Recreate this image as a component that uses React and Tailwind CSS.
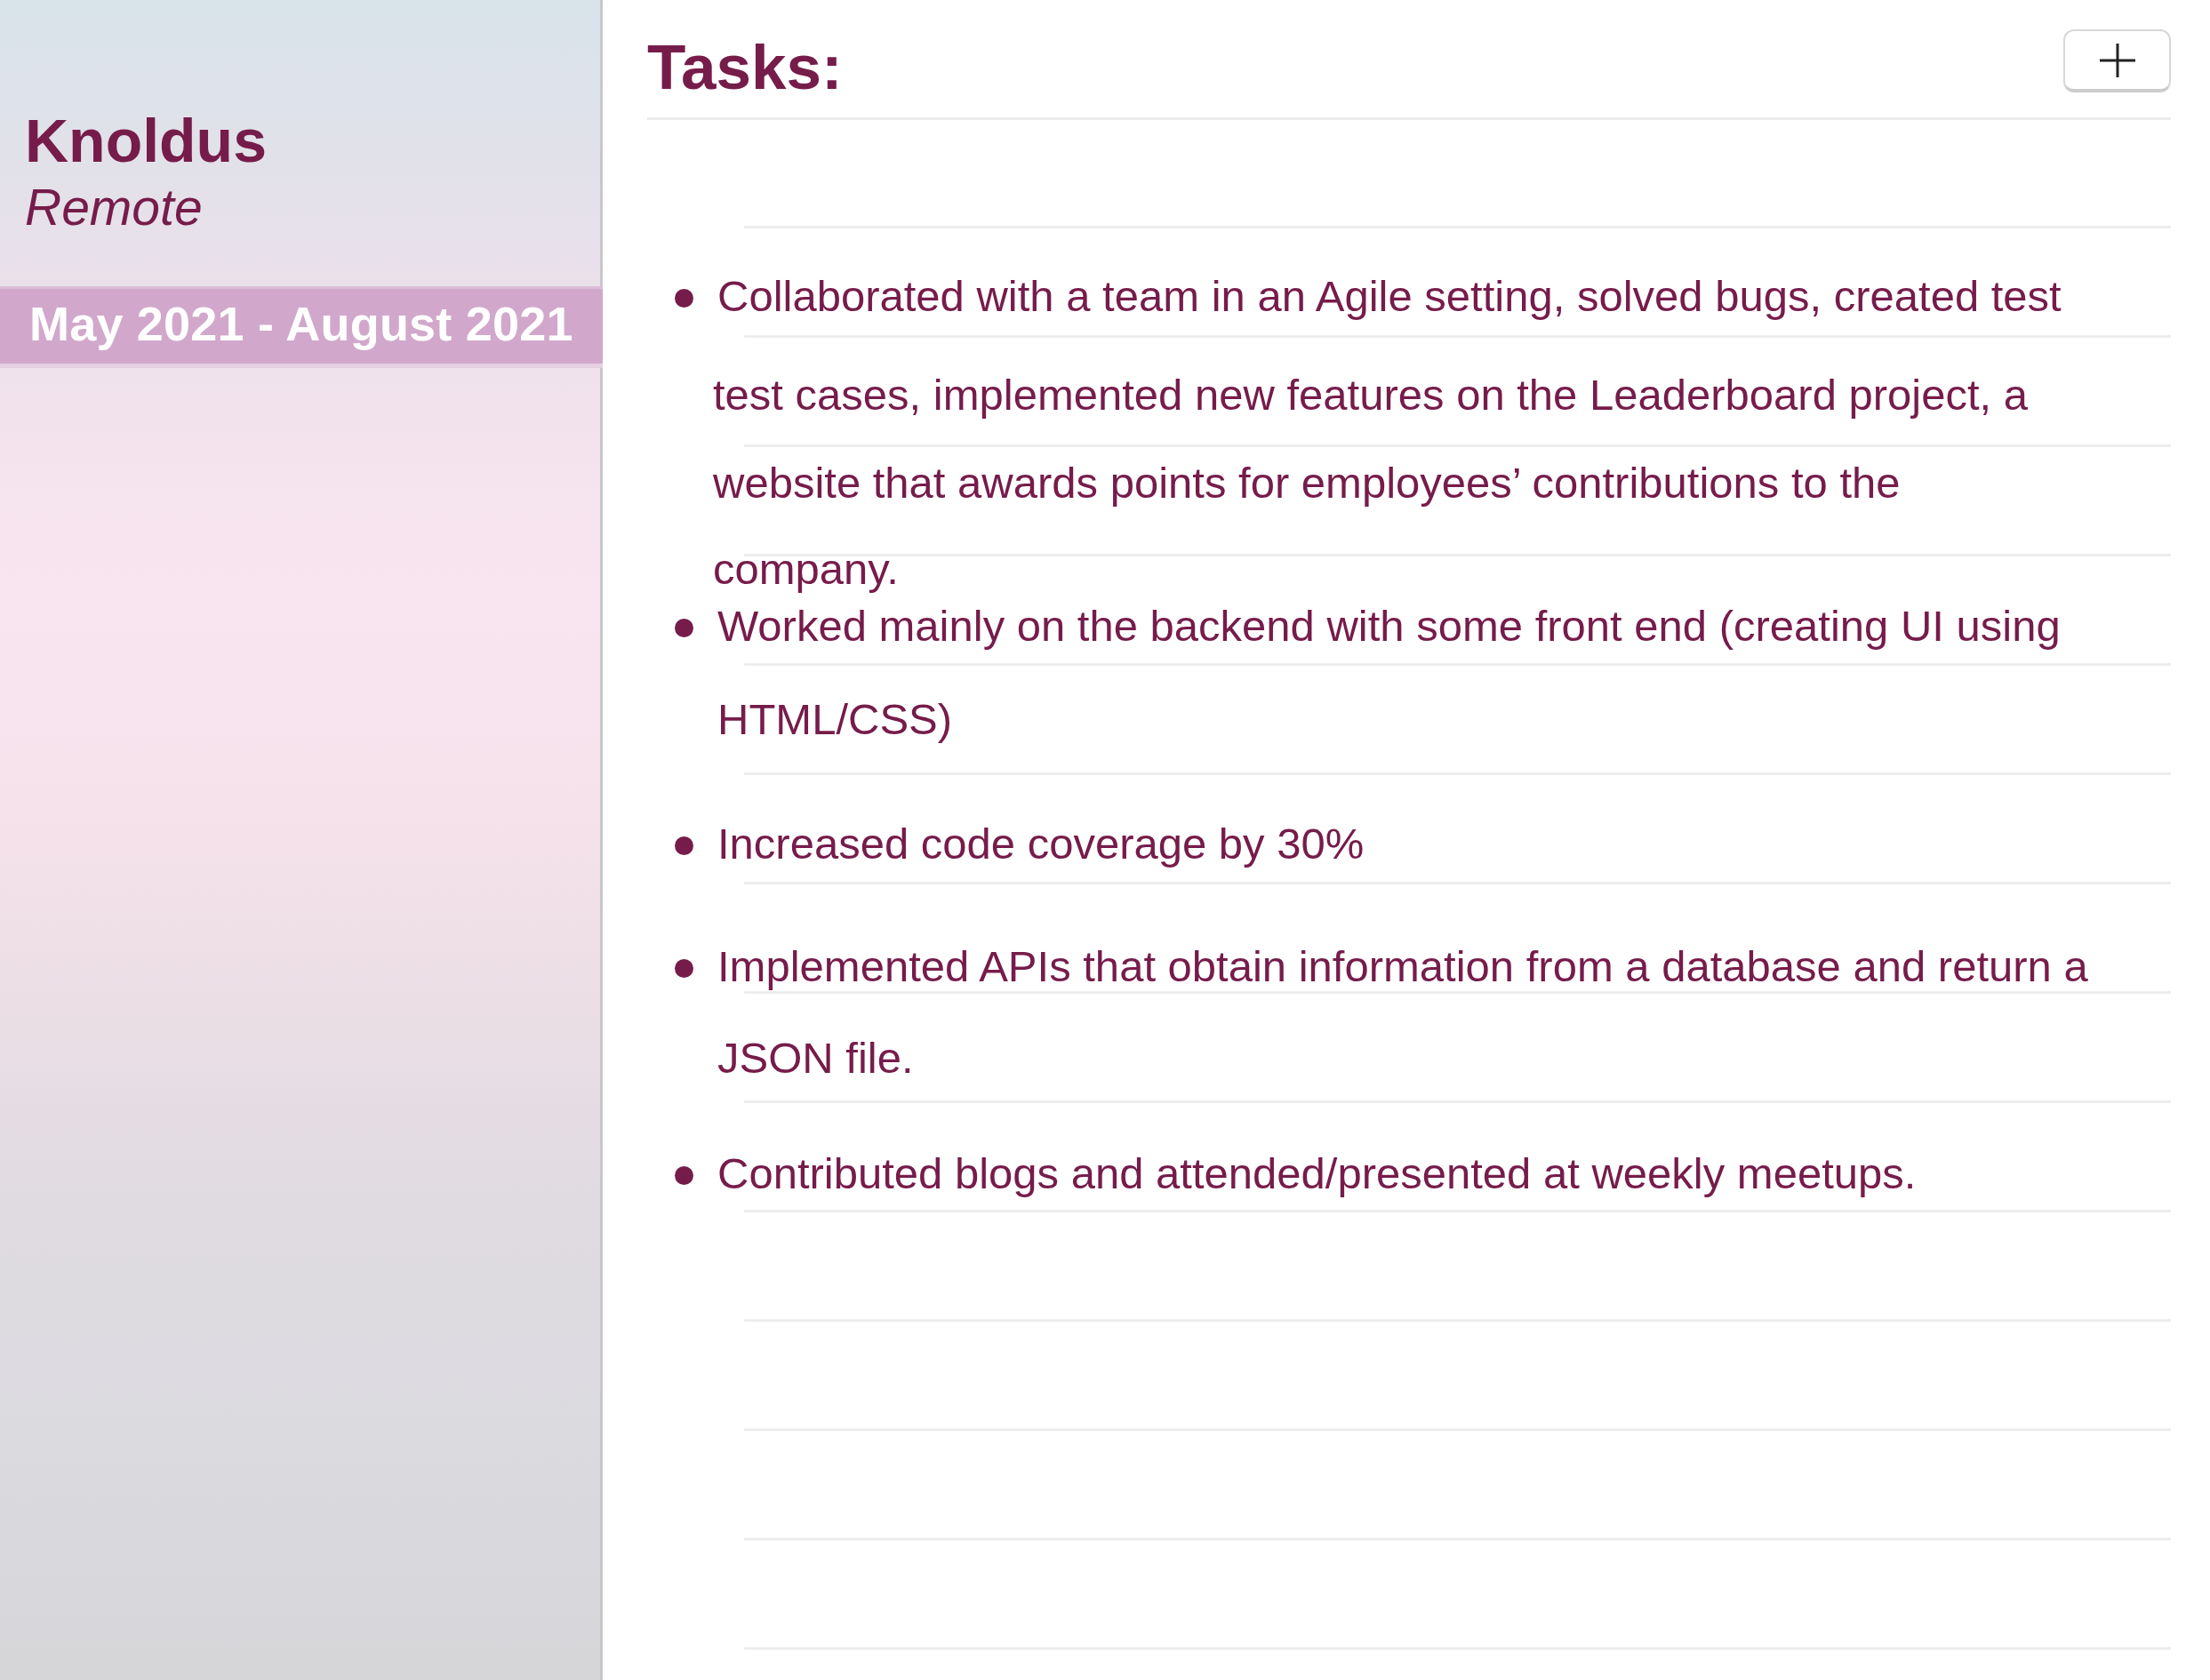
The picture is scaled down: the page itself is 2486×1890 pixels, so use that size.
import React from 'react';

const tasks = [
  {
    lines: [
      { text: 'Collaborated with a team in an Agile setting, solved bugs, created test', mt: 0 },
      { text: 'test cases, implemented new features on the Leaderboard project, a', mt: 62, shift: true },
      { text: 'website that awards points for employees\u2019 contributions to the', mt: 50, shift: true },
      { text: 'company.', mt: 48, shift: true },
    ],
    mt: 174,
  },
  {
    lines: [
      { text: 'Worked mainly on the backend with some front end (creating UI using', mt: 0 },
      { text: 'HTML/CSS)', mt: 56 },
    ],
    mt: 15,
  },
  { lines: [{ text: 'Increased code coverage by 30%', mt: 0 }], mt: 91 },
  {
    lines: [
      { text: 'Implemented APIs that obtain information from a database and return a', mt: 0 },
      { text: 'JSON file.', mt: 54 },
    ],
    mt: 89,
  },
  { lines: [{ text: 'Contributed blogs and attended/presented at weekly meetups.', mt: 0 }], mt: 81 },
];

const TaskItem = ({ task }) => (
  <div className="flex" style={{ marginTop: task.mt }}>
    <div className="w-[79px] shrink-0">
      <div className="ml-[31px] mt-[16px] h-[21px] w-[21px] rounded-full bg-[#761c4a]" />
    </div>
    <div className="flex flex-col">
      {task.lines.map((line, i) => (
        <div
          key={i}
          className={`whitespace-nowrap text-[49px] leading-[49px] ${line.shift ? '-ml-[5px]' : ''}`}
          style={{ marginTop: line.mt }}
        >
          {line.text}
        </div>
      ))}
    </div>
  </div>
);

const PlusIcon = () => (
  <svg width="40" height="40" viewBox="0 0 40 40" fill="none">
    <line x1="20" y1="1" x2="20" y2="39" stroke="#222222" strokeWidth="3" />
    <line x1="0" y1="20" x2="40" y2="20" stroke="#222222" strokeWidth="3" />
  </svg>
);

const App = () => {
  return (
    <div className="flex h-[1890px] w-full overflow-hidden bg-white font-['Liberation_Sans','Helvetica_Neue',Arial,sans-serif] text-[#761c4a]">
      {/* sidebar */}
      <aside className="flex w-[678px] shrink-0 flex-col border-r-[3px] border-[#c9c7cc] bg-[linear-gradient(180deg,#d8e3ea_0%,#e2e1ea_10%,#ebe0ea_18%,#f4e3ed_27%,#f9e5ef_36%,#f6e2eb_48%,#ebdee5_60%,#dfdbe1_72%,#dbdadf_85%,#d6d6d9_100%)]">
        <div className="pl-[28px] pt-[124px]">
          <h2 className="text-[68px] font-bold leading-[68px]">Knoldus</h2>
          <p className="mt-[13px] text-[57px] italic leading-[57px]">Remote</p>
        </div>
        <div className="-mr-[3px] mt-[60px] h-[92px] border-t-[3px] border-b-[5px] border-t-[#dcbdd7] border-b-[#e6d0e3] bg-[#d1a8cb] pl-[33px] pt-[12px]">
          <span className="whitespace-nowrap text-[54px] font-bold leading-[54px] tracking-[0.2px] text-white">May 2021 - August 2021</span>
        </div>
      </aside>

      {/* tasks */}
      <main className="flex min-w-0 flex-1 flex-col pl-[50px] pr-[44px]">
        <header className="flex h-[135px] items-start justify-between border-b-[3px] border-[#ececec] pt-[33px]">
          <h1 className="mt-[8px] text-[71px] font-bold leading-[70px]">Tasks:</h1>
          <button className="flex h-[71px] w-[121px] items-center justify-center rounded-[12px] border-2 border-b-4 border-[#d8d8d8] border-b-[#cdcdcd] bg-white">
            <PlusIcon />
          </button>
        </header>

        <div className="grid">
          <div className="col-start-1 row-start-1 flex flex-col pl-[109px]">
            <div className="h-[122px] border-b-[3px] border-[#ededed]" />
            {Array.from({ length: 13 }).map((_, i) => (
              <div key={i} className="h-[123px] border-b-[3px] border-[#ededed]" />
            ))}
          </div>
          <div className="col-start-1 row-start-1 flex flex-col">
            {tasks.map((task, i) => (
              <TaskItem key={i} task={task} />
            ))}
          </div>
        </div>
      </main>
    </div>
  );
};

export default App;
